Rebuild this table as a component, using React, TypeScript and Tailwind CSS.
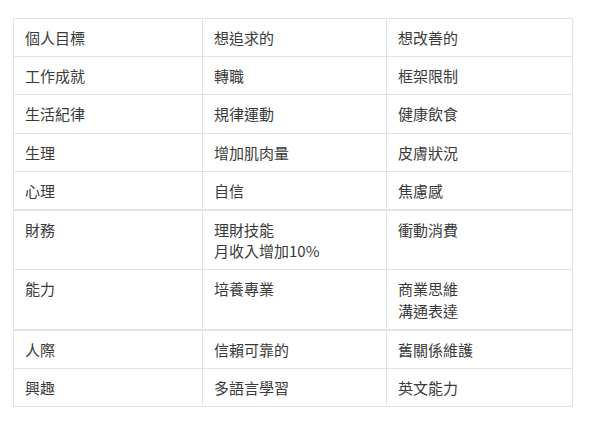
import React from 'react';

type Row = { goal: string; want: string[]; improve: string[]; thick?: boolean };

const rows: Row[] = [
  { goal: '工作成就', want: ['轉職'], improve: ['框架限制'] },
  { goal: '生活紀律', want: ['規律運動'], improve: ['健康飲食'] },
  { goal: '生理', want: ['增加肌肉量'], improve: ['皮膚狀況'] },
  { goal: '心理', want: ['自信'], improve: ['焦慮感'] },
  { goal: '財務', want: ['理財技能', '月收入增加10%'], improve: ['衝動消費'], thick: true },
  { goal: '能力', want: ['培養專業'], improve: ['商業思維', '溝通表達'] },
  { goal: '人際', want: ['信賴可靠的'], improve: ['舊關係維護'], thick: true },
  { goal: '興趣', want: ['多語言學習'], improve: ['英文能力'] },
];

const cell = 'border border-[#e3e3e3] px-[11px] py-2 align-top text-left font-normal';

export default function App() {
  return (
    <div className="w-[591px] h-[426px] bg-white pt-[18px] pl-[13px] font-['Noto_Sans_CJK_TC','Noto_Sans',sans-serif] text-[15px] leading-[21.2px] text-[#3a3a3a]">
      <table className="border-collapse w-[559px] table-fixed">
        <colgroup>
          <col className="w-[189px]" />
          <col className="w-[184px]" />
          <col className="w-[186px]" />
        </colgroup>
        <thead>
          <tr>
            <th className={cell}>個人目標</th>
            <th className={cell}>想追求的</th>
            <th className={cell}>想改善的</th>
          </tr>
        </thead>
        <tbody>
          {rows.map((r) => (
            <tr key={r.goal}>
              <td className={`${cell} ${r.thick ? 'border-t-2' : ''}`}>{r.goal}</td>
              <td className={`${cell} ${r.thick ? 'border-t-2' : ''}`}>
                {r.want.map((w) => (
                  <div key={w}>{w}</div>
                ))}
              </td>
              <td className={`${cell} ${r.thick ? 'border-t-2' : ''}`}>
                {r.improve.map((w) => (
                  <div key={w}>{w}</div>
                ))}
              </td>
            </tr>
          ))}
        </tbody>
      </table>
    </div>
  );
}
